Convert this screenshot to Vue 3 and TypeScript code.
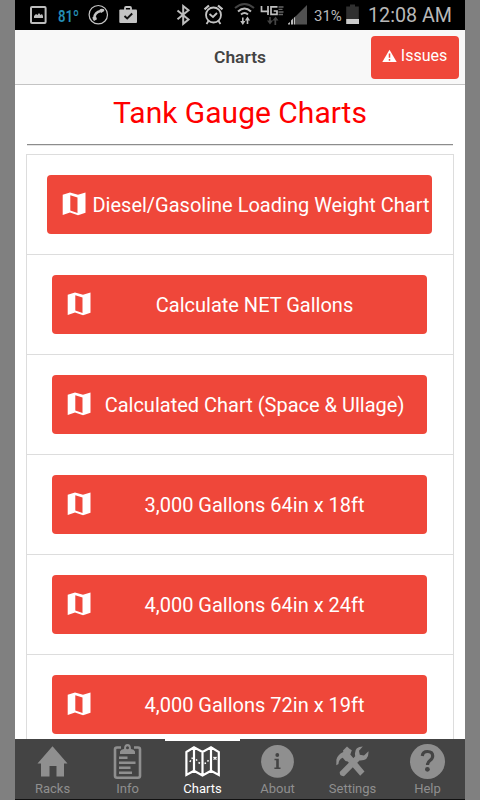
<script setup lang="ts">
interface Chart { label: string; size: string }
interface Tab { id: string; label: string; active?: boolean }

const charts: Chart[] = [
  { label: 'Diesel/Gasoline Loading Weight Chart', size: 'wide' },
  { label: 'Calculate NET Gallons', size: '' },
  { label: 'Calculated Chart (Space & Ullage)', size: '' },
  { label: '3,000 Gallons 64in x 18ft', size: '' },
  { label: '4,000 Gallons 64in x 24ft', size: '' },
  { label: '4,000 Gallons 72in x 19ft', size: '' },
]

const tabs: Tab[] = [
  { id: 'racks', label: 'Racks' },
  { id: 'info', label: 'Info' },
  { id: 'charts', label: 'Charts', active: true },
  { id: 'about', label: 'About' },
  { id: 'settings', label: 'Settings' },
  { id: 'help', label: 'Help' },
]
</script>

<template>
  <div class="backdrop">
    <div class="phone">
      <div class="status">
        <svg class="s-image" width="20" height="30" viewBox="28 0 20 30">
          <rect x="31" y="7" width="14.6" height="16" rx="1" fill="none" stroke="#bdbdbd" stroke-width="2" />
          <path d="M34 18v-2l2-2 1.500 1 1.500-2 1.500 2 1.500-1 1 2v2z" fill="#bdbdbd" />
        </svg>
        <svg class="temp" width="28" height="30" viewBox="0 0 28 30">
          <text x="0" y="21.500" textLength="21" lengthAdjust="spacingAndGlyphs">81º</text>
        </svg>
        <svg class="s-phone" width="24" height="30" viewBox="86 0 24 30">
          <circle cx="98.300" cy="14.700" r="9.200" fill="none" stroke="#c4c4c4" stroke-width="1.200" />
          <path d="M94.300 18c.2-4 2.500-6.300 6.500-7" fill="none" stroke="#c4c4c4" stroke-width="2.400" />
          <path d="M92.500 17l3.500-.5 1 2.800-3 1.700q-1.800-1.500-1.500-4zM99.600 9.500q2-1.300 4.500-.2l.2 1.700-3.200 2z" fill="#c4c4c4" />
        </svg>
        <svg class="s-bag" width="22" height="30" viewBox="117 0 22 30">
          <path d="M125 10V8q0-1 1-1h4q1 0 1 1v2" fill="none" stroke="#c4c4c4" stroke-width="1.800" />
          <rect x="119.300" y="9.500" width="17.700" height="13.500" rx="1" fill="#c4c4c4" />
          <path d="M124.500 16l2.700 2.500 5-5" fill="none" stroke="#111" stroke-width="1.900" />
        </svg>
        <svg class="s-bt" width="20" height="30" viewBox="173 0 20 30">
          <path d="M177.500 10.500l11 9-5.300 4.300V6l5.300 4.200-11 9" fill="none" stroke="#bdbdbd" stroke-width="2" />
        </svg>
        <svg class="s-alarm" width="24" height="30" viewBox="201 0 24 30">
          <circle cx="213.500" cy="15" r="7.500" fill="none" stroke="#c4c4c4" stroke-width="1.800" />
          <path d="M204.500 9.300l4.500-3.800M222.500 9.300L218 5.500" stroke="#c4c4c4" stroke-width="2.200" />
          <path d="M209.500 14l3.500 3 4-4M208.500 21l-2 3M218.500 21l2 3" fill="none" stroke="#c4c4c4" stroke-width="1.800" />
        </svg>
        <svg class="s-wifi" width="24" height="30" viewBox="233 0 24 30">
          <g fill="none" stroke-width="2">
            <path d="M235 8q9.500-8 19 0" stroke="#444" />
            <path d="M238 11.500q6.500-6 13 0M241 14.500q3.500-3 7 0" stroke="#bdbdbd" />
          </g>
          <path d="M242.800 17.500V22M247.500 19V24" stroke="#bdbdbd" stroke-width="1.600" />
          <path d="M240.200 21h5.200l-2.600 4zM244.900 20.500h5.200l-2.600-4z" fill="#bdbdbd" />
        </svg>
        <svg class="s-4g" width="26" height="30" viewBox="259 0 26 30">
          <path d="M261.500 6v5.300H269M268 6v9M277.500 6.800H271v7.500h6V11h-3.300" fill="none" stroke="#c0c0c0" stroke-width="1.700" />
          <path d="M278.500 7h5M278.500 9.300h4M278.500 12h5M278.500 14.500h4.500" stroke="#666" stroke-width="1.300" />
          <path d="M270 17v6M275.300 19v6" stroke="#444" stroke-width="1.700" />
          <path d="M267 20.500h6l-3 4zM272.500 20.500h6l-2.900-4z" fill="#444" />
        </svg>
        <svg class="s-signal" width="22" height="30" viewBox="286 0 22 30">
          <path d="M295.500 24.500V16.500L307 5v19.500z" fill="#505050" />
          <path d="M288 24.500v-1l2-1.500v2.500zM291 24.500v-4l2-2v6zM293.800 24.500v-6.500l1.500-1.500v8z" fill="#bdbdbd" />
        </svg>
        <span class="pct">31%</span>
        <svg class="s-batt" width="16" height="30" viewBox="345 0 16 30">
          <path d="M350 4.500h5v2h3.800V19h-12.600V6.500h3.800z" fill="#303030" />
          <rect x="346.200" y="19" width="12.800" height="5" fill="#ccc" />
        </svg>
        <span class="clock">12:08 AM</span>
      </div>

      <header class="header">
        <span></span>
        <h1 class="page-title">Charts</h1>
        <button class="issues">
          <svg width="16" height="14" viewBox="0 0 16 14">
            <path d="M7.500.8L14.700 13H.3z" fill="#fff" />
            <path d="M7.500 4.500v4.300M7.500 10v1.700" stroke="#ef473a" stroke-width="1.500" />
          </svg>
          <span>Issues</span>
        </button>
      </header>

      <main class="content">
        <h2 class="title">Tank Gauge Charts</h2>
        <hr class="rule" />
        <div class="list">
          <div v-for="chart in charts" :key="chart.label" class="row">
            <button class="chart-btn" :class="chart.size">
              <svg class="map" width="24" height="24" viewBox="0 0 24 24">
                <path fill-rule="evenodd" d="M.7 2.700L8 .5l8 2.300 7.500-2.300v20.200L16 23.300l-8-2.800-7.300 2.500zM8.300 3.300v15.200l7.200 2.500V5.600z" fill="#fff" />
              </svg>
              <span class="chart-label">{{ chart.label }}</span>
            </button>
          </div>
        </div>
      </main>

      <nav class="tabs">
        <div v-for="tab in tabs" :key="tab.id" class="tab" :class="{ active: tab.active }">
          <svg class="tab-icon" width="75" height="40" viewBox="0 0 75 40">
            <path v-if="tab.id === 'racks'" d="M37.500 7.300L52.500 24.500H49V37.500h-7.500V27h-7v10.500H26v-13h-3.500z" fill="currentColor" />
            <g v-else-if="tab.id === 'info'">
              <path d="M31 8.500h-4q-2 0-2 2V37q0 1.700 2 1.700h21q2 0 2-1.700V10.500q0-2-2-2h-4" fill="none" stroke="currentColor" stroke-width="2.600" />
              <path fill-rule="evenodd" d="M30 15v-2.500q1-2.200 4-2.500 0-5 3.500-5T41 10q3 .3 4 2.500V15zM37.500 7.200a1.500 1.500 0 100 3 1.500 1.500 0 000-3z" fill="currentColor" />
              <path d="M29 18.800h8.500M29 23.700h16.500M29 28.800h11.500M29 33.800h13" stroke="currentColor" stroke-width="2.400" />
            </g>
            <g v-else-if="tab.id === 'charts'" fill="none" stroke="currentColor" stroke-width="2.200">
              <path d="M21.400 13L29 8.300l8.500 4.700L46 8.300l7.800 4.700v22.900L46 31.800l-8.500 4.600-8.500-4.600-7.600 4.100zM29 8.300v23.500M37.500 13v23.400M46 8.300v23.500" />
              <path d="M24.800 22.800l1-1.500M26.500 19.500l1.300-.5M31 20.500l1.200 1M33.500 23.500l1.500.8M39.500 24.500l1.500-.5M42.500 22.500l1-1.200M48.500 18l3 2.500M51.500 18l-3 2.500" stroke-width="1.500" />
            </g>
            <g v-else-if="tab.id === 'about'">
              <circle cx="37.500" cy="22.400" r="16.400" fill="currentColor" />
              <circle cx="37.300" cy="16" r="1.900" fill="#444" />
              <path d="M34.500 19.700h4.300v8.800h1.700V30h-6.100v-1.500h1.800V21.200h-1.700z" fill="#444" />
            </g>
            <g v-else-if="tab.id === 'settings'" fill="currentColor">
              <path d="M21.300 26.300L21.400 20.500Q23 15 28.300 13L28 11.500l4-4 2.500 2.200 2.300 1.600-1.500 4.200L49.500 32.500 45.200 36.800 32.700 22.500 30.500 22l-2.800-3.300Q23.500 20.500 23.500 25z" />
              <path d="M24.700 33L40.200 17.300Q38.500 7.500 47.800 7.500L44 11.700l.8 4 4.200.8 4.500-4.300Q54 22 44.500 21.500L29 37.200Q24.500 37.500 24.700 33z" />
            </g>
            <g v-else>
              <circle cx="37.500" cy="22.500" r="17.500" fill="currentColor" />
              <path d="M32.300 17q.4-4.500 5.200-4.500 5.200 0 5.200 4.500 0 2.500-2.700 4.500-2.500 1.800-2.500 4.500" fill="none" stroke="#444" stroke-width="3.200" />
              <circle cx="37.400" cy="30.300" r="2.400" fill="#444" />
            </g>
          </svg>
          <span class="tab-label">{{ tab.label }}</span>
        </div>
      </nav>
    </div>
  </div>
</template>

<style>
body { margin: 0; background: #808080; }
</style>

<style scoped>
.backdrop { width: 480px; height: 800px; padding: 0 15px; box-sizing: border-box; background: #808080; overflow: hidden; font-family: Roboto, sans-serif; }
.phone { width: 450px; height: 800px; background: #fff; display: flex; flex-direction: column; }
svg { display: block; flex: none; }
button { font-family: inherit; border: 0; padding: 0; }
.status { flex: none; height: 30px; background: #000; display: flex; align-items: center; color: #b8b8b8; white-space: nowrap; }
.s-image { margin-left: 13px; }
.temp { margin-left: 10px; font-size: 17px; font-weight: 600; fill: #258db4; }
.s-bag { margin-left: 7px; }
.s-bt { margin-left: 34px; }
.s-alarm, .s-wifi { margin-left: 8px; }
.s-4g { margin-left: 2px; }
.s-signal { margin-left: 1px; }
.pct { width: 30px; margin-left: 6px; padding-top: 1px; font-size: 15px; }
.s-batt { margin-left: 1px; }
.clock { margin-left: 7px; padding-top: 1px; font-size: 19.700px; }
.header { flex: none; height: 55px; box-sizing: border-box; background: #f8f8f8; border-bottom: 1px solid #c4c4c4; display: grid; grid-template-columns: 1fr auto 1fr; align-items: center; }
.page-title { margin: 0 0 1px; font-size: 17.400px; font-weight: 600; line-height: 20px; color: #444; }
.issues { justify-self: end; width: 88px; height: 43px; margin-right: 6px; margin-top: 1px; padding: 0 1px 4px 0; background: #ef473a; border-radius: 4px; color: #fff; font-size: 16px; display: flex; align-items: center; justify-content: center; gap: 3px; }
.content { flex: 1; min-height: 0; overflow: hidden; padding: 0 11px; }
.title { margin: 0; height: 58px; line-height: 56px; text-align: center; color: #f00; font-size: 30px; font-weight: 400; white-space: nowrap; }
.rule { margin: 1px 1px 0; height: 0; border: 0; border-top: 1px solid #8c8c8c; border-bottom: 1px solid #e4e4e4; box-sizing: content-box; }
.list { margin-top: 8px; border: 1px solid #ddd; border-width: 1px 1px 0; }
.row { height: 100px; box-sizing: border-box; padding: 20.300px 1px 20px 0; border-bottom: 1px solid #ddd; display: flex; justify-content: center; }
.chart-btn { width: 375px; height: 58.500px; box-sizing: border-box; padding-left: 15px; background: #ef473a; border-radius: 4px; color: #fff; font-size: 20px; display: flex; align-items: center; }
.chart-btn.wide { width: 385px; }
.map { margin-bottom: 1px; }
.chart-label { flex: 1; text-align: center; white-space: nowrap; padding-left: 5px; padding-right: 14px; }
.wide .chart-label { padding-left: 4px; padding-right: 0; }
.tabs { flex: none; height: 61px; box-sizing: border-box; background: #444; border-bottom: 1px solid #111; display: grid; grid-template-columns: repeat(6, 75px); }
.tab { box-sizing: border-box; color: #8f8f8f; }
.tab.active { color: #fff; box-shadow: inset 0 2px #fff; }
.tab-label { display: block; font-size: 13px; line-height: 20px; text-align: center; }
</style>
